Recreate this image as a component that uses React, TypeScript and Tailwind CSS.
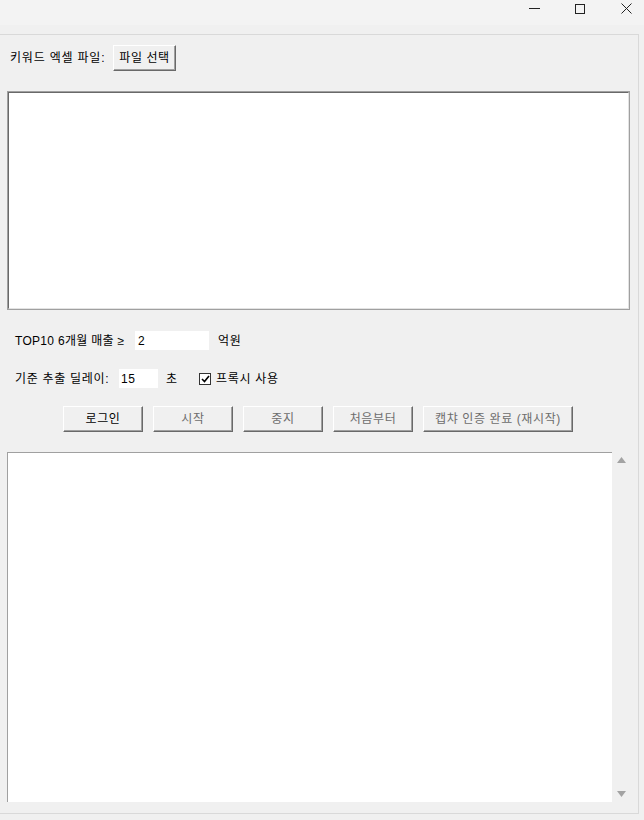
import React from "react";

const font = {
  fontFamily: '"Liberation Sans", "Noto Sans CJK KR", sans-serif',
};

// 윈도우 클래식 스타일 버튼
function WinButton({
  label,
  enabled = false,
  width,
}: {
  label: string;
  enabled?: boolean;
  width: string;
}) {
  return (
    <div
      className={`${width} h-[26px] border border-t-white border-l-white border-r-[#696969] border-b-[#696969] bg-[#f0f0f0] shadow-[inset_-1px_-1px_0_#a0a0a0] flex items-center justify-center text-[12px] tracking-[0.6px] ${
        enabled ? "text-black" : "text-[#6d6d6d]"
      }`}
    >
      {label}
    </div>
  );
}

export default function App() {
  return (
    <div
      className="w-[644px] h-[820px] bg-[#f0f0f0] text-[12px] text-black overflow-hidden"
      style={font}
    >
      {/* 타이틀 바 */}
      <div className="h-[25px] bg-[#f3f3f3] flex items-start justify-end pr-[12px]">
        <div className="w-[11px] h-[17px] flex items-center">
          <div className="w-[11px] h-px bg-[#222]" />
        </div>
        <div className="ml-[35px] w-[10px] h-[17px] flex items-center">
          <div className="w-[10px] h-[10px] border border-[#222]" />
        </div>
        <div className="ml-[36px] w-[11px] h-[17px] flex items-center">
          <svg width="11" height="11" viewBox="0 0 11 11">
            <path d="M0.5 0.5 L10.5 10.5 M10.5 0.5 L0.5 10.5" stroke="#222" strokeWidth="1" />
          </svg>
        </div>
      </div>

      <div className="pt-[9px]">
        <div className="w-[639px] h-[780px] border-t border-r border-b border-[#d9d9d9] flex flex-col">
          {/* 파일 선택 */}
          <div className="mt-[10px] flex items-center pl-[10px]">
            <span className="w-[103px] tracking-[0.8px]">키워드 엑셀 파일:</span>
            <WinButton label="파일 선택" enabled width="w-[63px]" />
          </div>

          {/* 상단 텍스트 영역 */}
          <div className="mt-[20px] ml-[7px] w-[623px] h-[219px] border border-[#a0a0a0] bg-white">
            <div className="w-full h-full border border-[#696969] border-r-[#e3e3e3] border-b-[#e3e3e3]" />
          </div>

          {/* 매출 조건 */}
          <div className="mt-[21px] flex items-center pl-[15px] h-[19px] tracking-[0.3px]">
            <span className="w-[120px]">TOP10 6개월 매출 ≥</span>
            <div className="w-[74px] h-[19px] bg-white flex items-center pl-[3px]">
              2
            </div>
            <span className="ml-[9px] tracking-[0.6px]">억원</span>
          </div>

          {/* 딜레이 / 프록시 */}
          <div className="mt-[19px] flex items-center pl-[15px] h-[19px] tracking-[0.7px]">
            <span className="w-[104px]">기준 추출 딜레이:</span>
            <div className="w-[39px] h-[19px] bg-white flex items-center pl-[2px]">
              15
            </div>
            <span className="ml-[8px] w-[33px]">초</span>
            <div className="w-[12px] h-[12px] bg-white border border-[#333] flex items-center justify-center">
              <svg width="9" height="8" viewBox="0 0 9 8">
                <path d="M1 4 L3.5 6.5 L8 1" stroke="#000" strokeWidth="1.6" fill="none" />
              </svg>
            </div>
            <span className="ml-[5px]">프록시 사용</span>
          </div>

          {/* 버튼 줄 */}
          <div className="mt-[18px] flex pl-[63px] gap-[10px]">
            <WinButton label="로그인" enabled width="w-[80px]" />
            <WinButton label="시작" width="w-[80px]" />
            <WinButton label="중지" width="w-[80px]" />
            <WinButton label="처음부터" width="w-[80px]" />
            <WinButton label="캡챠 인증 완료 (재시작)" width="w-[150px]" />
          </div>

          {/* 로그 영역 */}
          <div className="mt-[20px] ml-[7px] flex h-[350px]">
            <div className="w-[605px] h-full bg-white border-t border-l border-[#a0a0a0]" />
            <div className="w-[18px] h-full flex flex-col items-center justify-between py-[5px]">
              <svg width="9" height="6" viewBox="0 0 9 6">
                <path d="M4.5 0 L9 6 L0 6 Z" fill="#a3a3a3" />
              </svg>
              <svg width="9" height="6" viewBox="0 0 9 6">
                <path d="M0 0 L9 0 L4.5 6 Z" fill="#a3a3a3" />
              </svg>
            </div>
          </div>
        </div>
      </div>
    </div>
  );
}
